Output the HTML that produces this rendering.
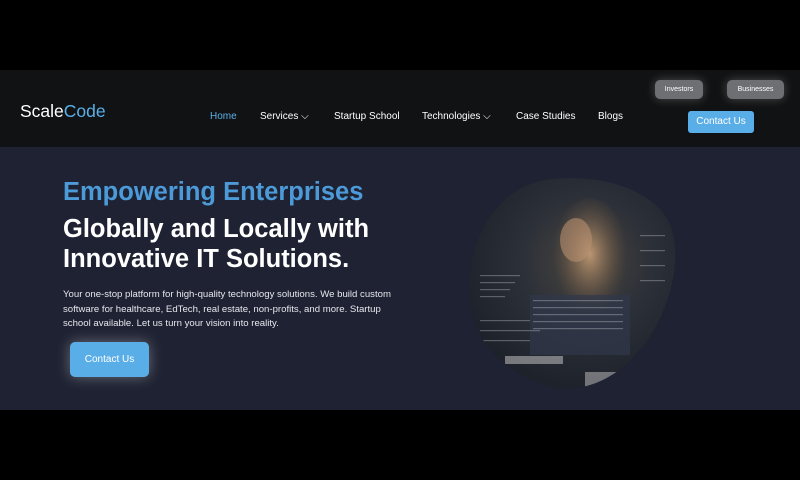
<!DOCTYPE html>
<html><head><meta charset="utf-8"><style>
*{margin:0;padding:0;box-sizing:border-box}
body{width:800px;height:480px;background:#000;font-family:"Liberation Sans",sans-serif;position:relative;overflow:hidden;color:#fff}
.hdr{position:absolute;top:70px;left:0;width:800px;height:77px;background:#111213}
.hero{position:absolute;top:147px;left:0;width:800px;height:263px;background:#1e2232}
.logo{position:absolute;left:20px;top:101px;font-size:17.5px;color:#fff}
.logo span{color:#5ab0ea}
.nav{position:absolute;top:111px;font-size:10px;line-height:12px;color:#fff}
.pill{position:absolute;top:80px;height:19px;background:#6d6f72;border-radius:5px;font-size:7px;color:#fff;text-align:center;line-height:19px;box-shadow:0 0 10px rgba(255,255,255,.25)}
.btn{position:absolute;background:#5aaee8;color:#fff;border-radius:3px;text-align:center}
h1{position:absolute;left:63px;font-weight:bold}
p.d{position:absolute;left:63px;top:288px;width:340px;font-size:9.6px;line-height:14.5px;color:#e6e8ee}
</style></head><body>
<div class="hdr"></div>
<div class="hero"></div>
<div class="logo">Scale<span>Code</span></div>
<div class="nav" style="left:210px;color:#5ab0ea">Home</div>
<div class="nav" style="left:260px">Services ⌵</div>
<div class="nav" style="left:334px">Startup School</div>
<div class="nav" style="left:422px">Technologies ⌵</div>
<div class="nav" style="left:516px">Case Studies</div>
<div class="nav" style="left:598px">Blogs</div>
<div class="pill" style="left:655px;width:48px">Investors</div>
<div class="pill" style="left:727px;width:57px">Businesses</div>
<div class="btn" style="left:688px;top:111px;width:66px;height:22px;line-height:22px;font-size:10px">Contact Us</div>
<h1 style="top:178px;font-size:25.5px;color:#4d9ad8">Empowering Enterprises</h1>
<h1 style="top:214px;font-size:25.5px;line-height:30px">Globally and Locally with<br>Innovative IT Solutions.</h1>
<p class="d">Your one-stop platform for high-quality technology solutions. We build custom software for healthcare, EdTech, real estate, non-profits, and more. Startup school available. Let us turn your vision into reality.</p>
<div class="btn" style="left:70px;top:342px;width:79px;height:35px;line-height:35px;font-size:10px;border-radius:5px;box-shadow:0 0 14px rgba(255,255,255,.35)">Contact Us</div>
<svg style="position:absolute;left:0;top:0" width="800" height="480">
<defs>
<radialGradient id="g" cx="0.55" cy="0.4" r="0.7">
<stop offset="0" stop-color="#4a4640"/><stop offset="0.4" stop-color="#2c3038"/><stop offset="1" stop-color="#161a22"/></radialGradient>
<radialGradient id="f" cx="0.5" cy="0.45" r="0.5"><stop offset="0" stop-color="#c8a078"/><stop offset="1" stop-color="#6a5038" stop-opacity="0"/></radialGradient>
<clipPath id="c"><path d="M545 180 C600 172 660 190 672 230 C684 275 660 330 635 355 C610 385 570 395 545 385 C520 375 475 355 470 300 C465 250 490 190 545 180Z"/></clipPath>
</defs>
<g clip-path="url(#c)">
<rect x="460" y="170" width="230" height="230" fill="url(#g)"/>
<ellipse cx="590" cy="260" rx="38" ry="62" fill="url(#f)" opacity=".9"/>
<ellipse cx="576" cy="240" rx="16" ry="22" fill="#b89070" opacity=".6"/>
<rect x="530" y="295" width="100" height="60" fill="#30384a" opacity=".7"/>
<g fill="#c8ccd4" opacity=".35">
<rect x="480" y="275" width="40" height="1.2"/><rect x="480" y="282" width="35" height="1.2"/><rect x="480" y="289" width="30" height="1.2"/><rect x="480" y="296" width="25" height="1.2"/>
<rect x="533" y="300" width="90" height="1.2"/><rect x="533" y="307" width="90" height="1.2"/><rect x="533" y="314" width="90" height="1.2"/><rect x="533" y="321" width="90" height="1.2"/><rect x="533" y="328" width="90" height="1.2"/>
<rect x="640" y="235" width="25" height="1.2"/><rect x="640" y="250" width="25" height="1.2"/><rect x="640" y="265" width="25" height="1.2"/><rect x="640" y="280" width="25" height="1.2"/>
<rect x="480" y="320" width="50" height="1.2"/><rect x="480" y="330" width="60" height="1.2"/><rect x="480" y="340" width="50" height="1.2"/>
</g>
<rect x="505" y="356" width="58" height="8" fill="#cfcfcf" opacity=".5"/>
<rect x="585" y="372" width="55" height="18" fill="#d8d8d8" opacity=".45"/>
</g>
</svg>
</body></html>
